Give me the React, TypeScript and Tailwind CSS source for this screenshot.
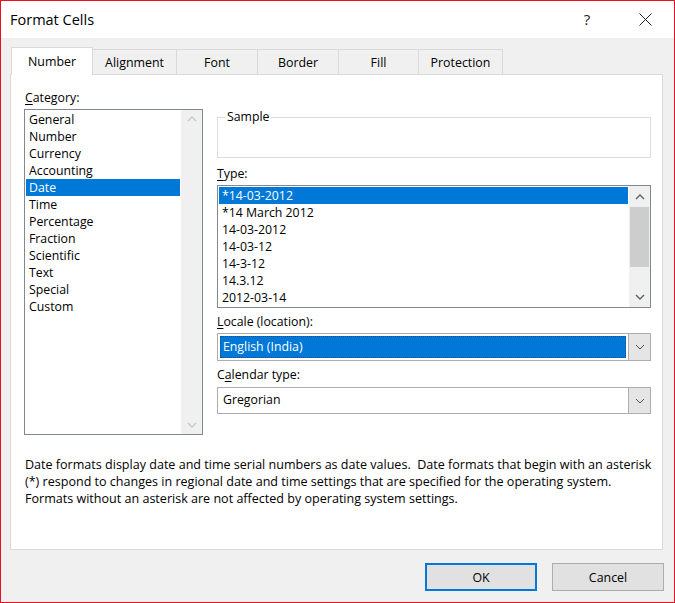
import React from 'react';

const categories = [
  'General',
  'Number',
  'Currency',
  'Accounting',
  'Date',
  'Time',
  'Percentage',
  'Fraction',
  'Scientific',
  'Text',
  'Special',
  'Custom',
];

const types = [
  '*14-03-2012',
  '*14 March 2012',
  '14-03-2012',
  '14-03-12',
  '14-3-12',
  '14.3.12',
  '2012-03-14',
];

const tabs = [
  { name: 'Number', w: 'w-[82px]' },
  { name: 'Alignment', w: 'w-[84px]' },
  { name: 'Font', w: 'w-[81px]' },
  { name: 'Border', w: 'w-[81px]' },
  { name: 'Fill', w: 'w-[80px]' },
  { name: 'Protection', w: 'w-[84px]' },
];

function Chevron({ up, color }: { up?: boolean; color: string }) {
  return (
    <svg width="10" height="6" viewBox="0 0 10 6">
      <polyline
        points={up ? '1,5 5,1 9,5' : '1,1 5,5 9,1'}
        fill="none"
        stroke={color}
        strokeWidth="1.4"
      />
    </svg>
  );
}

function ThinChevron() {
  return (
    <svg width="10" height="6" viewBox="0 0 10 6">
      <polyline points="1,1 5,5 9,1" fill="none" stroke="#505050" strokeWidth="1" />
    </svg>
  );
}

function TitleBar() {
  return (
    <div className="h-[37px] bg-white flex items-center pl-[9px] shrink-0">
      <div className="text-[14.5px] text-black flex-1">Format Cells</div>
      <div className="w-[58px] text-center text-[15px] text-[#222]">?</div>
      <div className="w-[58px] flex justify-center">
        <svg width="13" height="13" viewBox="0 0 13 13">
          <line x1="0.5" y1="0.5" x2="12.5" y2="12.5" stroke="#222" strokeWidth="1" />
          <line x1="12.5" y1="0.5" x2="0.5" y2="12.5" stroke="#222" strokeWidth="1" />
        </svg>
      </div>
    </div>
  );
}

function Tabs() {
  return (
    <div className="flex items-end h-[27px] pl-[1px]">
      {tabs.map((t, i) =>
        i === 0 ? (
          <div
            key={t.name}
            className={`${t.w} h-[28px] -mb-[1px] relative z-10 bg-white border-l border-t border-r border-[#d9d9d9] flex items-center justify-center pt-[2px] text-[12.4px]`}
          >
            {t.name}
          </div>
        ) : (
          <div
            key={t.name}
            className={`${t.w} h-[25px] bg-[#f0f0f0] border-t border-r border-[#d9d9d9] flex items-center justify-center pt-[2px] text-[12.4px]`}
          >
            {t.name}
          </div>
        )
      )}
    </div>
  );
}

function CategoryList() {
  return (
    <div className="h-[326px] border border-[#828790] bg-white flex">
      <div className="flex-1 p-[1px]">
        {categories.map((c) => (
          <div
            key={c}
            className={`h-[17px] leading-[17px] pl-[3px] ${
              c === 'Date' ? 'bg-[#0078d7] text-white' : ''
            }`}
          >
            {c}
          </div>
        ))}
      </div>
      <div className="w-[21px] bg-[#f0f0f0] flex flex-col justify-between items-center py-[6px]">
        <Chevron up color="#c8c8c8" />
        <Chevron color="#c8c8c8" />
      </div>
    </div>
  );
}

function TypeList() {
  return (
    <div className="h-[123px] border border-[#828790] bg-white flex">
      <div className="flex-1 p-[1px]">
        {types.map((t, i) => (
          <div
            key={t}
            className={`h-[17px] leading-[17px] pl-[3px] ${
              i === 0 ? 'bg-[#0078d7] text-white' : ''
            }`}
          >
            {t}
          </div>
        ))}
      </div>
      <div className="w-[21px] bg-[#f0f0f0] flex flex-col">
        <div className="h-[21px] flex items-center justify-center">
          <Chevron up color="#606060" />
        </div>
        <div className="h-[60px] mx-[1px] bg-[#cdcdcd]" />
        <div className="flex-1 flex items-end justify-center pb-[7px]">
          <Chevron color="#606060" />
        </div>
      </div>
    </div>
  );
}

function Combo({ value, focused, h }: { value: string; focused?: boolean; h: string }) {
  return (
    <div className={`${h} border border-[#adadad] bg-white flex`}>
      <div className="flex-1 p-[2px] flex">
        <div
          className={`flex-1 flex items-center pl-[3px] ${
            focused ? 'bg-[#0078d7] text-white outline-1 outline-dotted outline-[#1a4f88] -outline-offset-1' : ''
          }`}
        >
          {value}
        </div>
      </div>
      <div className="w-[22px] bg-[#e5e5e5] border-l border-[#adadad] flex items-center justify-center">
        <ThinChevron />
      </div>
    </div>
  );
}

function Label({ k, rest, pre }: { k: string; rest: string; pre?: string }) {
  return (
    <div className="h-[17px] leading-[17px]">
      {pre}
      <span className="underline underline-offset-2">{k}</span>
      {rest}
    </div>
  );
}

export default function App() {
  return (
    <div className="w-[675px] h-[603px] border border-[#e81123] flex flex-col bg-[#f0f0f0] text-black text-[12.3px] font-['Open_Sans','Noto_Sans',sans-serif]">
      <TitleBar />
      <div className="flex-1 flex flex-col px-[9px] pt-[9px]">
        <Tabs />
        <div className="w-[653px] h-[476px] border border-[#d9d9d9] bg-white flex flex-col">
          <div className="flex pt-[14px] pl-[13px]">
            <div className="w-[179px]">
              <div className="pl-[1px] mb-[3px]">
                <Label k="C" rest="ategory:" />
              </div>
              <CategoryList />
            </div>
            <div className="w-[434px] ml-[14px]">
              <fieldset className="mt-[20px] border border-[#dcdcdc]">
                <legend className="ml-[8px] px-[1px] leading-[16px]">Sample</legend>
                <div className="h-[32px]" />
              </fieldset>
              <div className="mt-[7px] mb-[3px]">
                <Label k="T" rest="ype:" />
              </div>
              <TypeList />
              <div className="mt-[5px] mb-[3px]">
                <Label k="L" rest="ocale (location):" />
              </div>
              <Combo value="English (India)" focused h="h-[28px]" />
              <div className="mt-[5px] mb-[4px]">
                <Label pre="C" k="a" rest="lendar type:" />
              </div>
              <Combo value="Gregorian" h="h-[27px]" />
            </div>
          </div>
          <div className="mt-[21px] pl-[14px] leading-[17px] text-[12.55px]">
            <div className="whitespace-pre">
              Date formats display date and time serial numbers as date values.  Date formats that begin with an asterisk
            </div>
            <div className="whitespace-pre">
              (*) respond to changes in regional date and time settings that are specified for the operating system.
            </div>
            <div className="whitespace-pre">
              Formats without an asterisk are not affected by operating system settings.
            </div>
          </div>
        </div>
        <div className="flex justify-end gap-[15px] mt-[13px] mr-[1px]">
          <button className="w-[112px] h-[28px] pt-[2px] bg-[#e1e1e1] border-2 border-[#0078d7] text-[12.4px]">
            OK
          </button>
          <button className="w-[112px] h-[28px] pt-[2px] bg-[#e1e1e1] border border-[#adadad] text-[12.4px]">
            Cancel
          </button>
        </div>
      </div>
    </div>
  );
}
